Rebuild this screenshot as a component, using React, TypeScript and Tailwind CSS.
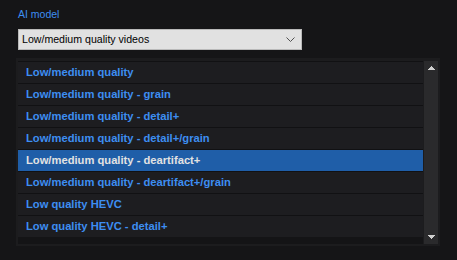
import { useState } from 'react'

const MODELS = [
  'Low/medium quality',
  'Low/medium quality - grain',
  'Low/medium quality - detail+',
  'Low/medium quality - detail+/grain',
  'Low/medium quality - deartifact+',
  'Low/medium quality - deartifact+/grain',
  'Low quality HEVC',
  'Low quality HEVC - detail+',
]

export default function App() {
  const [selected, setSelected] = useState(4)

  return (
    <div
      className="w-[457px] h-[260px] bg-[#151517] pl-4 pt-[7px]"
      style={{ fontFamily: '"Liberation Sans", Arial, sans-serif' }}
    >
      {/* Label */}
      <div className="ml-[2px] text-[10.5px] leading-[15px] text-[#3d8ef2]">AI model</div>

      {/* Dropdown */}
      <div className="ml-[2px] mt-[7px] w-[284px] h-[21px] bg-[#e1e1e1] border border-[#b9b9b9] flex items-center justify-between pl-[3px] pr-[5px]">
        <span className="text-[10.6px] text-black">Low/medium quality videos</span>
        <svg width="9" height="5" viewBox="0 0 9 5" className="mr-[1px]">
          <path d="M0.5 0.5 L4.5 4.5 L8.5 0.5" fill="none" stroke="#505050" strokeWidth="1" />
        </svg>
      </div>

      {/* List */}
      <div className="mt-[8px] w-[424px] h-[188px] bg-[#1c1c1e] pl-[2px] pt-[3px] pr-[2px] pb-[2px] flex gap-[1px]">
        <div className="w-[405px] h-[183px] bg-[#141416] flex flex-col">
          {MODELS.map((m, i) => (
            <button
              key={m}
              onClick={() => setSelected(i)}
              className={`h-[22px] shrink-0 border-t border-[#111113] pl-2 text-left text-[11.2px] font-bold ${
                i === selected ? 'bg-[#1f5ea8] text-[#e2e2e2]' : 'bg-[#1d1d20] text-[#3d8ef2]'
              }`}
            >
              {m}
            </button>
          ))}
        </div>

        {/* Scrollbar */}
        <div className="w-[14px] h-[183px] bg-[#2a2a2c] flex flex-col items-center justify-between pt-[5px] pb-[5px]">
          <svg width="7" height="4" viewBox="0 0 7 4">
            <path d="M3 0 H4 V1 H5 V2 H6 V3 H7 V4 H0 V3 H1 V2 H2 V1 H3 Z" fill="#d0d0d0" />
          </svg>
          <svg width="7" height="4" viewBox="0 0 7 4">
            <path d="M0 0 H7 V1 H6 V2 H5 V3 H4 V4 H3 V3 H2 V2 H1 V1 H0 Z" fill="#d0d0d0" />
          </svg>
        </div>
      </div>
    </div>
  )
}
